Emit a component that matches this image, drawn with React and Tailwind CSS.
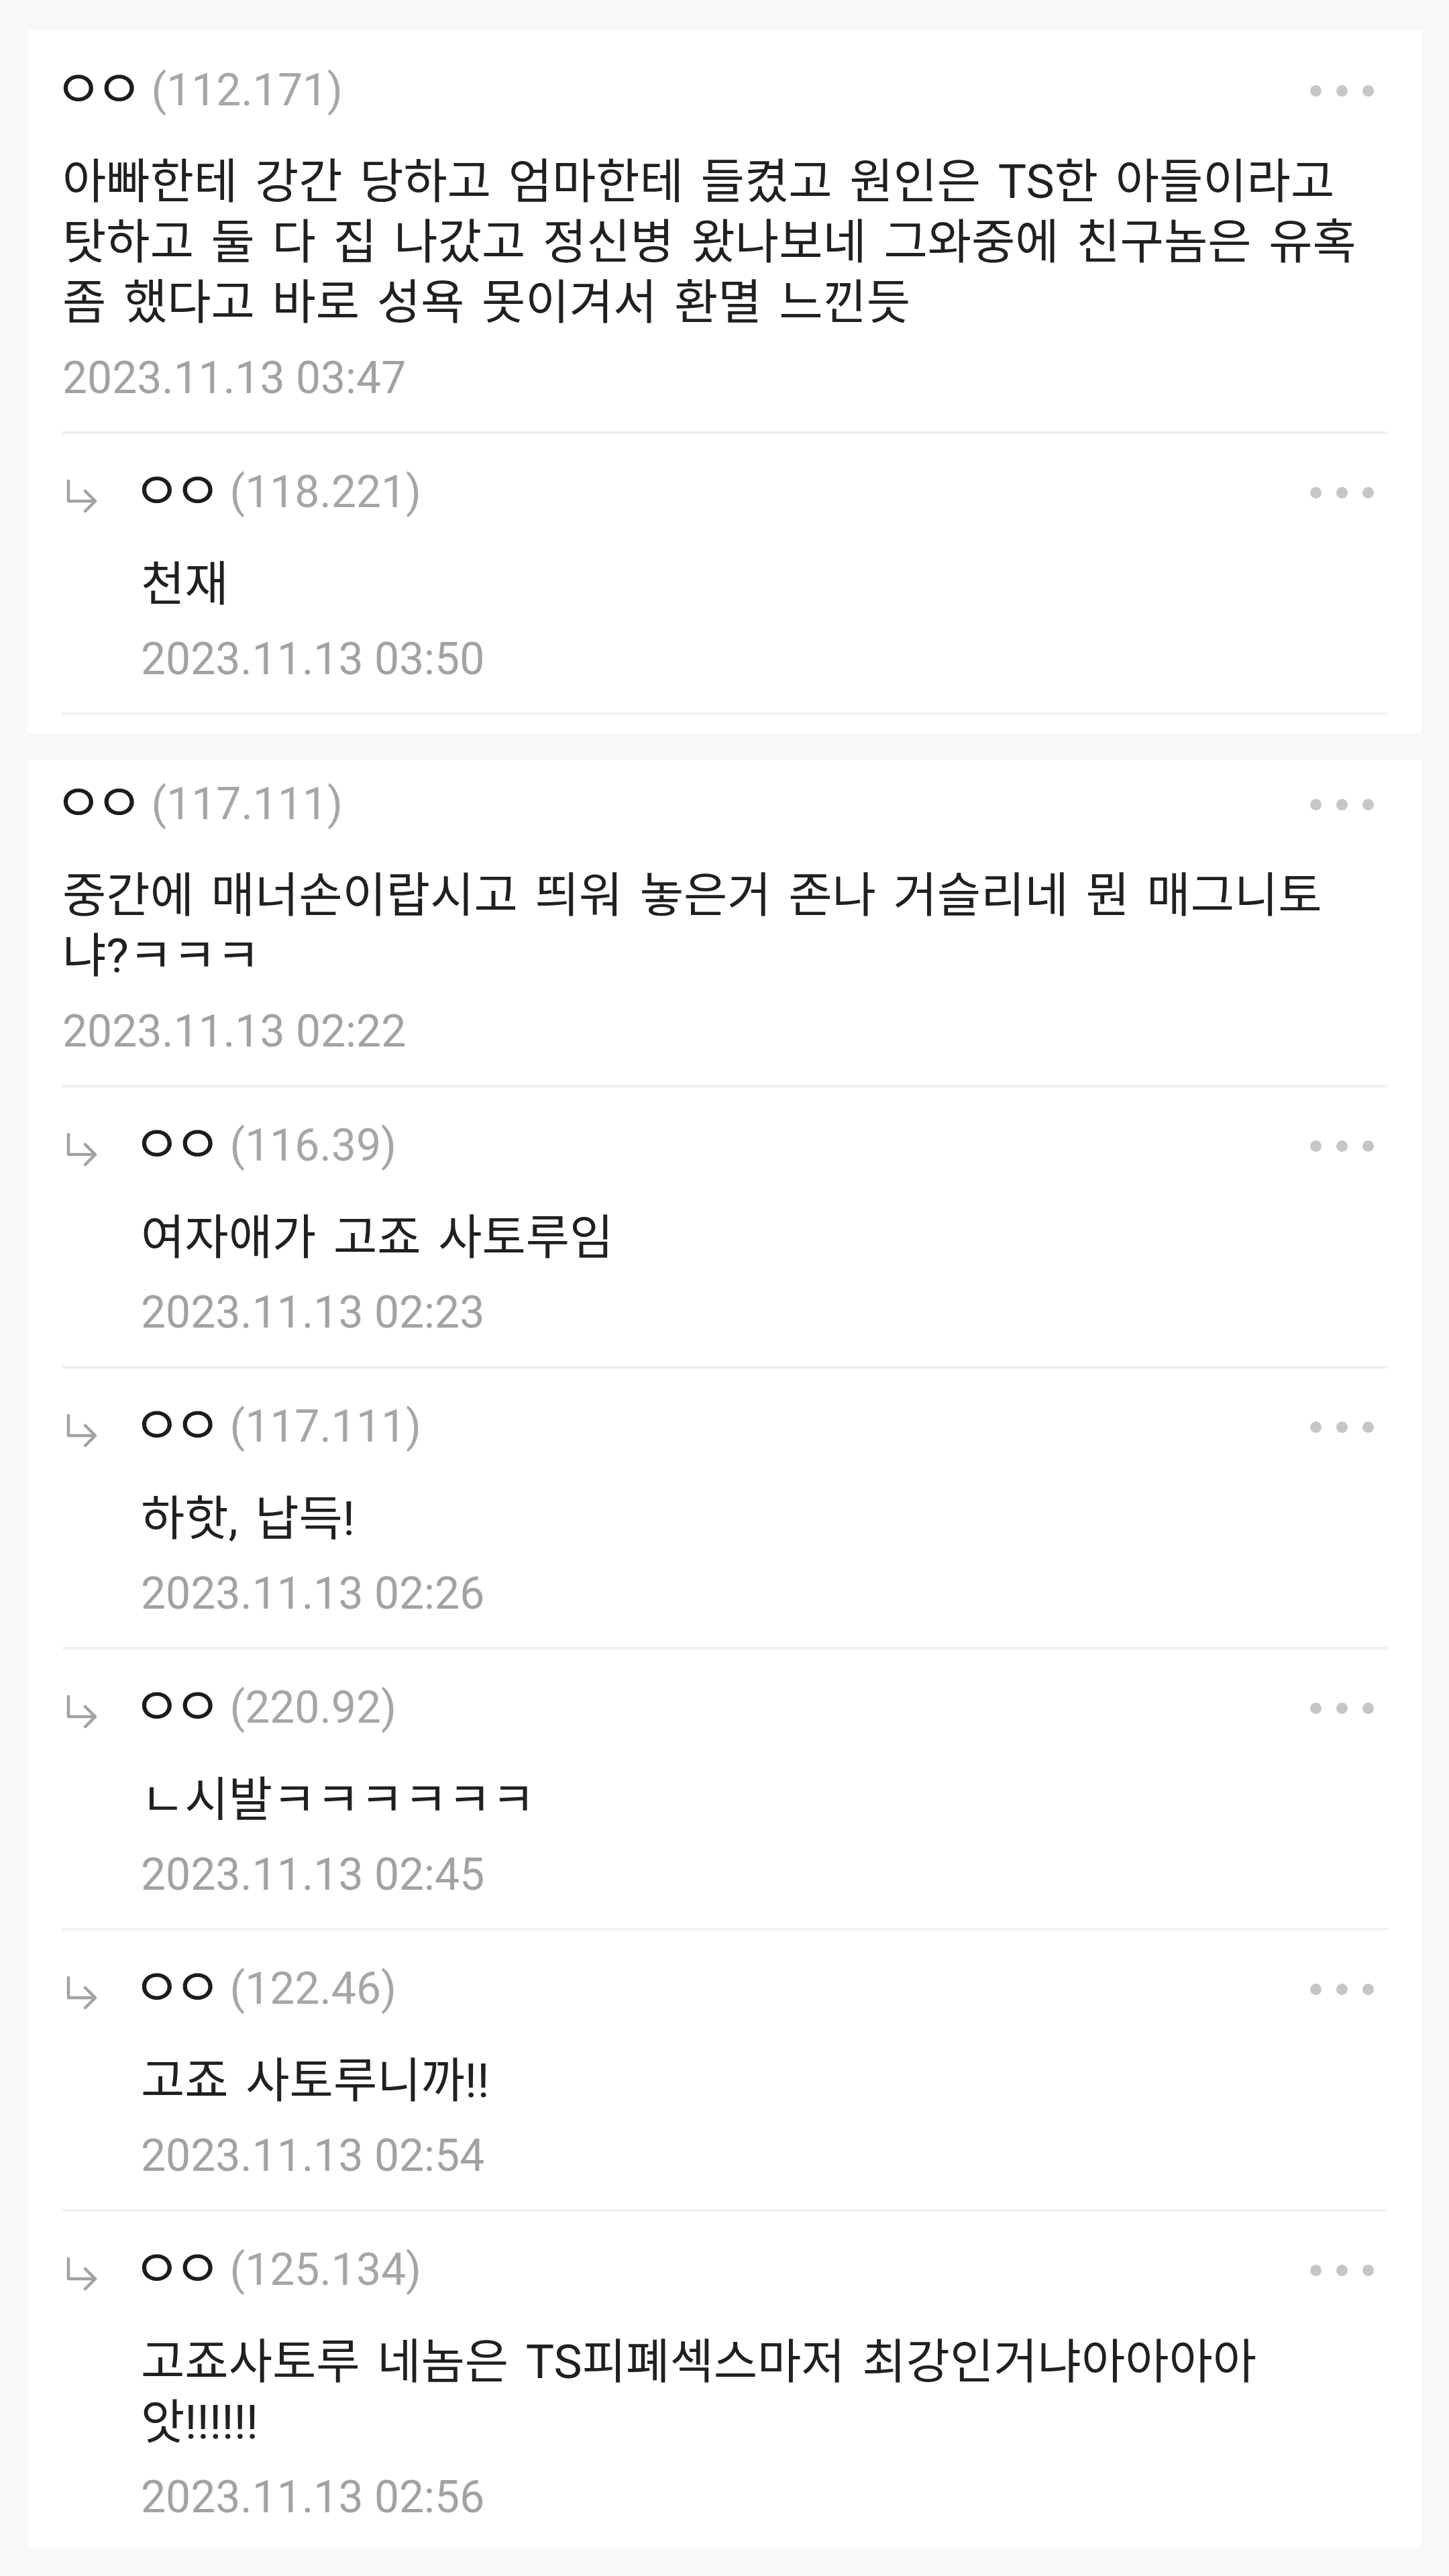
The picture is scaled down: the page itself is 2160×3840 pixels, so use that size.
const threads = [
  {
    ip: '112.171',
    lines: [
      '아빠한테 강간 당하고 엄마한테 들켰고 원인은 TS한 아들이라고',
      '탓하고 둘 다 집 나갔고 정신병 왔나보네 그와중에 친구놈은 유혹',
      '좀 했다고 바로 성욕 못이겨서 환멸 느낀듯'
    ],
    date: '2023.11.13 03:47',
    first: true,
    replies: [{ ip: '118.221', lines: ['천재'], date: '2023.11.13 03:50' }]
  },
  {
    ip: '117.111',
    lines: ['중간에 매너손이랍시고 띄워 놓은거 존나 거슬리네 뭔 매그니토', '냐?ㅋㅋㅋ'],
    date: '2023.11.13 02:22',
    last: true,
    replies: [
      { ip: '116.39', lines: ['여자애가 고죠 사토루임'], date: '2023.11.13 02:23' },
      { ip: '117.111', lines: ['하핫, 납득!'], date: '2023.11.13 02:26' },
      { ip: '220.92', lines: ['ㄴ시발ㅋㅋㅋㅋㅋㅋ'], date: '2023.11.13 02:45' },
      { ip: '122.46', lines: ['고죠 사토루니까!!'], date: '2023.11.13 02:54' },
      { ip: '125.134', lines: ['고죠사토루 네놈은 TS피폐섹스마저 최강인거냐아아아아', '앗!!!!!!'], date: '2023.11.13 02:56' }
    ]
  }
];

const Dots = () => (
  <div className="mr-[21px] flex items-center gap-[22px]">
    <span className="h-[17px] w-[17px] rounded-full bg-[#c6c6c6]" />
    <span className="h-[17px] w-[17px] rounded-full bg-[#c6c6c6]" />
    <span className="h-[17px] w-[17px] rounded-full bg-[#c6c6c6]" />
  </div>
);

const ReplyArrow = () => (
  <div className="w-[117px] shrink-0">
    <svg width="46" height="50" viewBox="0 0 46 50" className="ml-[6px] mt-[10px]" fill="none" stroke="#a2a2a2" strokeWidth="4.5" strokeLinecap="round" strokeLinejoin="round">
      <path d="M3 3 V33 H42" />
      <path d="M28 18 L43 33 L28 48" />
    </svg>
  </div>
);

const Header = ({ ip, reply }) => (
  <div className="flex h-[90px] items-center justify-between">
    <div className="flex items-center">
      {reply ? <ReplyArrow /> : null}
      {/* nickname: two ㅇ jamo, a bit larger than the rest */}
      <span className="-ml-[12px] text-[78px] leading-[90px] tracking-[-11px] text-[#1c1c1c]">ㅇㅇ</span>
      <span className="ml-[23px] text-[66px] leading-[90px] text-[#a6a6a6]">({ip})</span>
    </div>
    <Dots />
  </div>
);

const Body = ({ lines, date, reply }) => (
  <div className={reply ? 'pl-[117px]' : ''}>
    <p className={`${reply ? 'mt-[47px]' : 'mt-[46px]'} text-[71px] leading-[90px] [word-spacing:8px] text-[#202020]`}>
      {lines.map((line, i) => (
        <span key={i}>
          {i > 0 ? <br /> : null}
          {line}
        </span>
      ))}
    </p>
    <p className={`${reply ? 'mt-[22px]' : 'mt-[23px]'} text-[66px] leading-[90px] text-[#a2a2a2]`}>{date}</p>
  </div>
);

const Divider = () => <div className="mt-[34px] h-[4px] bg-[#f1f1f1]" />;

const Thread = ({ thread }) => (
  <section className={`${thread.first ? 'mt-[45px] pt-[45px]' : 'mt-[40px] pt-[21px]'} ${thread.last ? 'pb-[29px]' : 'pb-[27px]'} mx-[41px] bg-white pl-[52px] pr-[50px]`}>
    <Header ip={thread.ip} />
    <Body lines={thread.lines} date={thread.date} />
    <Divider />
    {thread.replies.map((r, i) => {
      const isLast = thread.last && i === thread.replies.length - 1;
      return (
        <div key={r.ip + r.date} className="mt-[42px]">
          <Header ip={r.ip} reply />
          <Body lines={r.lines} date={r.date} reply />
          {isLast ? null : <Divider />}
        </div>
      );
    })}
  </section>
);

export default function App() {
  return (
    <div className="min-h-[3840px] w-[2160px] overflow-hidden bg-[#f8f8f8] font-['Roboto','Noto_Sans_CJK_KR',sans-serif]">
      {threads.map((t) => <Thread key={t.ip + t.date} thread={t} />)}
    </div>
  );
}
